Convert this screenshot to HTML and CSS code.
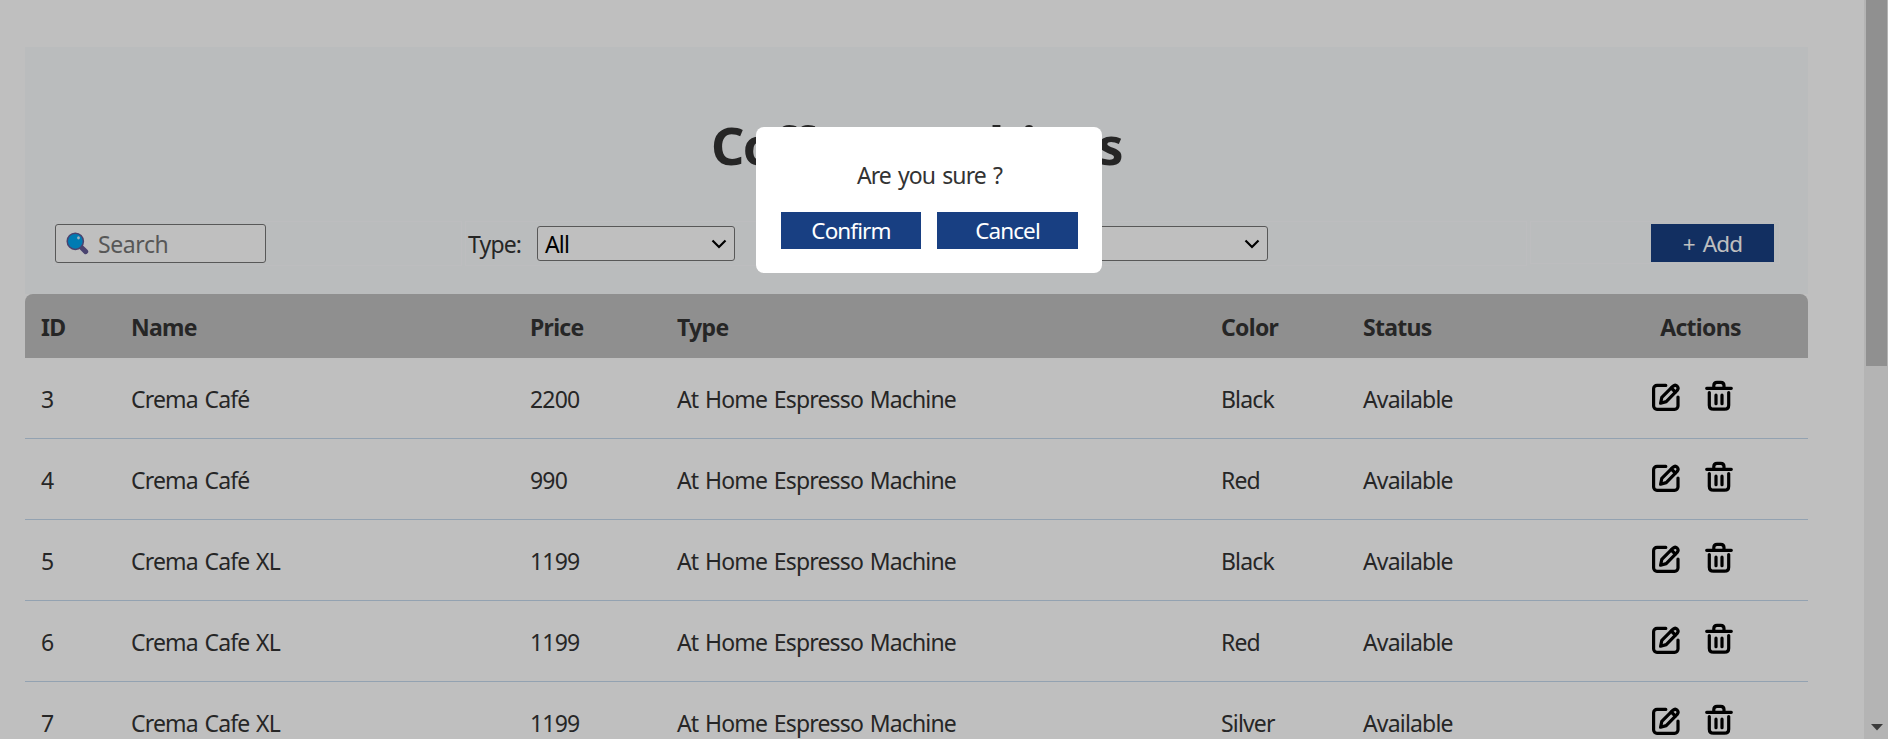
FILE: index.html
```
<!DOCTYPE html>
<html lang="en">
<head>
<meta charset="utf-8">
<title>Coffee machines</title>
<link rel="stylesheet" href="styles.css">
</head>
<body>
<svg class="defs" width="0" height="0">
  <symbol id="edit" viewBox="0 0 28 28" fill="none" stroke="#000" stroke-width="3.2" stroke-linecap="round" stroke-linejoin="round">
    <path d="M13.800 2.400H5A3.400 3.400 0 0 0 1.600 5.800V23A3.400 3.400 0 0 0 5 26.300H22.600A3.400 3.400 0 0 0 26 23V14"/>
    <path d="M8.600 20.200L9.800 14.400L21 3.200Q23.200 1.200 25.200 3.200Q27 5.200 25.200 7.400L14.200 18.600Z"/>
    <path d="M19.300 5L23.300 9"/>
  </symbol>
  <symbol id="trash" viewBox="0 0 28 31" fill="none" stroke="#000" stroke-width="3.2" stroke-linecap="round">
    <path d="M1.700 8.300H26.300M8.800 8V5.500Q8.800 2.300 12 2.300H15.800Q19 2.300 19 5.500V8"/>
    <path d="M4.300 12.500V25.200Q4.300 29.200 8.500 29.200H19.500Q23.700 29.200 23.700 25.200V12.500M11 15.200V23.700M17 15.200V23.700"/>
  </symbol>
</svg>
<div class="layout">
  <main class="content">
    <section class="panel">
      <h1 class="title">Coffee machines</h1>
      <div class="toolbar">
        <div class="box box-search">
          <div class="search">
            <svg width="23" height="23" viewBox="0 0 23 23"><path d="M15.500 15.500L19.700 19.600" stroke="#635a94" stroke-width="5" stroke-linecap="round"/><circle cx="9.300" cy="9.300" r="8.100" fill="#00a4ef" stroke="#635a94" stroke-width="1.500"/><ellipse cx="12.500" cy="5.800" rx="1.400" ry="1.600" fill="#d5efff"/></svg>
            <span class="placeholder">Search</span>
          </div>
        </div>
        <div class="box box-filters">
          <span class="label">Type:</span>
          <div class="select"><span>All</span><svg width="16" height="10" viewBox="0 0 16 10"><path d="M1.500 1.500L8 8L14.500 1.500" fill="none" stroke="#000" stroke-width="2.200"/></svg></div>
          <div class="select select-second"><svg width="16" height="10" viewBox="0 0 16 10"><path d="M1.500 1.500L8 8L14.500 1.500" fill="none" stroke="#000" stroke-width="2.200"/></svg></div>
        </div>
        <div class="box box-add"><button class="btn btn-add">+ Add</button></div>
      </div>
    </section>
    <table class="table">
      <colgroup><col class="c1"><col class="c2"><col class="c3"><col class="c4"><col class="c5"><col class="c6"><col class="c7"></colgroup>
      <thead><tr><th>ID</th><th>Name</th><th>Price</th><th>Type</th><th>Color</th><th>Status</th><th class="actions-head">Actions</th></tr></thead>
      <tbody>
        <tr><td>3</td><td>Crema Café</td><td>2200</td><td>At Home Espresso Machine</td><td>Black</td><td>Available</td><td><div class="actions"><svg class="i-edit"><use href="#edit"/></svg><svg class="i-trash"><use href="#trash"/></svg></div></td></tr>
        <tr><td>4</td><td>Crema Café</td><td>990</td><td>At Home Espresso Machine</td><td>Red</td><td>Available</td><td><div class="actions"><svg class="i-edit"><use href="#edit"/></svg><svg class="i-trash"><use href="#trash"/></svg></div></td></tr>
        <tr><td>5</td><td>Crema Cafe XL</td><td>1199</td><td>At Home Espresso Machine</td><td>Black</td><td>Available</td><td><div class="actions"><svg class="i-edit"><use href="#edit"/></svg><svg class="i-trash"><use href="#trash"/></svg></div></td></tr>
        <tr><td>6</td><td>Crema Cafe XL</td><td>1199</td><td>At Home Espresso Machine</td><td>Red</td><td>Available</td><td><div class="actions"><svg class="i-edit"><use href="#edit"/></svg><svg class="i-trash"><use href="#trash"/></svg></div></td></tr>
        <tr><td>7</td><td>Crema Cafe XL</td><td>1199</td><td>At Home Espresso Machine</td><td>Silver</td><td>Available</td><td><div class="actions"><svg class="i-edit"><use href="#edit"/></svg><svg class="i-trash"><use href="#trash"/></svg></div></td></tr>
      </tbody>
    </table>
  </main>
  <div class="scrollbar"><div class="thumb"></div><svg class="arrow" width="12" height="7" viewBox="0 0 12 7"><path d="M0 0H12L6 6.500Z" fill="#505050"/></svg></div>
</div>
<div class="overlay">
  <div class="modal">
    <p class="question">Are you sure ?</p>
    <div class="modal-actions"><button class="btn btn-confirm">Confirm</button><button class="btn">Cancel</button></div>
  </div>
</div>
</body>
</html>
```
FILE: styles.css
```
* { box-sizing: border-box; }
body {
  margin: 0;
  height: 739px;
  overflow: hidden;
  background: #fff;
  color: #333;
  font: 23px/32px "Noto Sans", "Open Sans", sans-serif;
  letter-spacing: -0.83px;
  word-spacing: 1.5px;
}
.defs { position: absolute; }
.layout { display: flex; height: 739px; overflow: hidden; }
.content { flex: 1; padding: 47px 56px 0 25px; }
.panel { height: 247px; padding-top: 63px; background: #f9fbfd; }
.title {
  margin: 0;
  height: 111px;
  font-size: 52px;
  line-height: 70px;
  letter-spacing: -1.4px;
  text-align: center;
}
.toolbar { display: flex; align-items: flex-start; gap: 3px; padding: 0 28px; }
.box { display: flex; align-items: center; height: 45px; border: 1px solid #fcfdff; }
.box-search { width: 409px; padding-left: 1px; }
.box-filters { width: 1062px; padding-left: 2px; }
.box-add { flex: 1; height: 43px; justify-content: flex-end; padding-right: 5px; }
.search {
  display: flex;
  align-items: center;
  gap: 9px;
  width: 211px;
  height: 39px;
  padding-left: 10px;
  background: #fff;
  border: 1px solid #767676;
  border-radius: 3px;
}
.placeholder { padding-top: 1px; color: #757575; letter-spacing: -0.4px; }
.label { width: 69px; }
.select {
  display: flex;
  align-items: center;
  justify-content: space-between;
  width: 198px;
  height: 35px;
  padding: 0 7px;
  background: #fff;
  color: #000;
  border: 1px solid #767676;
  border-radius: 3px;
}
.select-second { margin-left: 335px; justify-content: flex-end; }
.btn {
  flex: 1;
  height: 37px;
  padding: 1px 0 0;
  border: 0;
  background: #183f82;
  color: #fff;
  font: inherit;
  font-size: 22.5px;
  letter-spacing: -0.9px;
}
.btn-confirm { flex: none; width: 140px; }
.btn-add { flex: none; width: 123px; height: 38px; padding-top: 2px; word-spacing: 3px; }
.table { width: 1783px; table-layout: fixed; border-spacing: 0; }
.c1 { width: 90px; }
.c2 { width: 399px; }
.c3 { width: 147px; }
.c4 { width: 544px; }
.c5 { width: 142px; }
.c6 { width: 246px; }
.c7 { width: 215px; }
th { height: 64px; padding: 2px 16px 0; background: #bfbfbf; text-align: left; font-weight: 700; letter-spacing: -0.7px; }
th:first-child { border-top-left-radius: 8px; }
th:last-child { border-top-right-radius: 8px; }
th.actions-head { text-align: center; }
td { height: 81px; padding: 2px 16px 0; border-bottom: 1px solid #c5d9ec; }
.actions { display: flex; align-items: flex-start; gap: 25px; height: 32px; padding-left: 43px; }
.i-edit { width: 28px; height: 28px; margin-top: 0; }
.i-trash { width: 28px; height: 31px; margin-top: -3px; }
.scrollbar {
  display: flex;
  flex-direction: column;
  justify-content: space-between;
  width: 24px;
  padding: 0 1px 8px 2px;
  background: #f1f1f1;
}
.thumb { height: 366px; background: #c1c1c1; }
.arrow { margin-left: 5px; }
.overlay {
  position: absolute;
  inset: 0;
  background: rgba(0, 0, 0, .25);
}
.modal {
  width: 346px;
  height: 146px;
  margin: 127px 0 0 756px;
  padding: 32px 24px 24px 25px;
  background: #fff;
  border-radius: 8px;
}
.question { margin: 0 0 21px; text-align: center; letter-spacing: -0.9px; word-spacing: 2px; }
.modal-actions { display: flex; gap: 16px; }
```
